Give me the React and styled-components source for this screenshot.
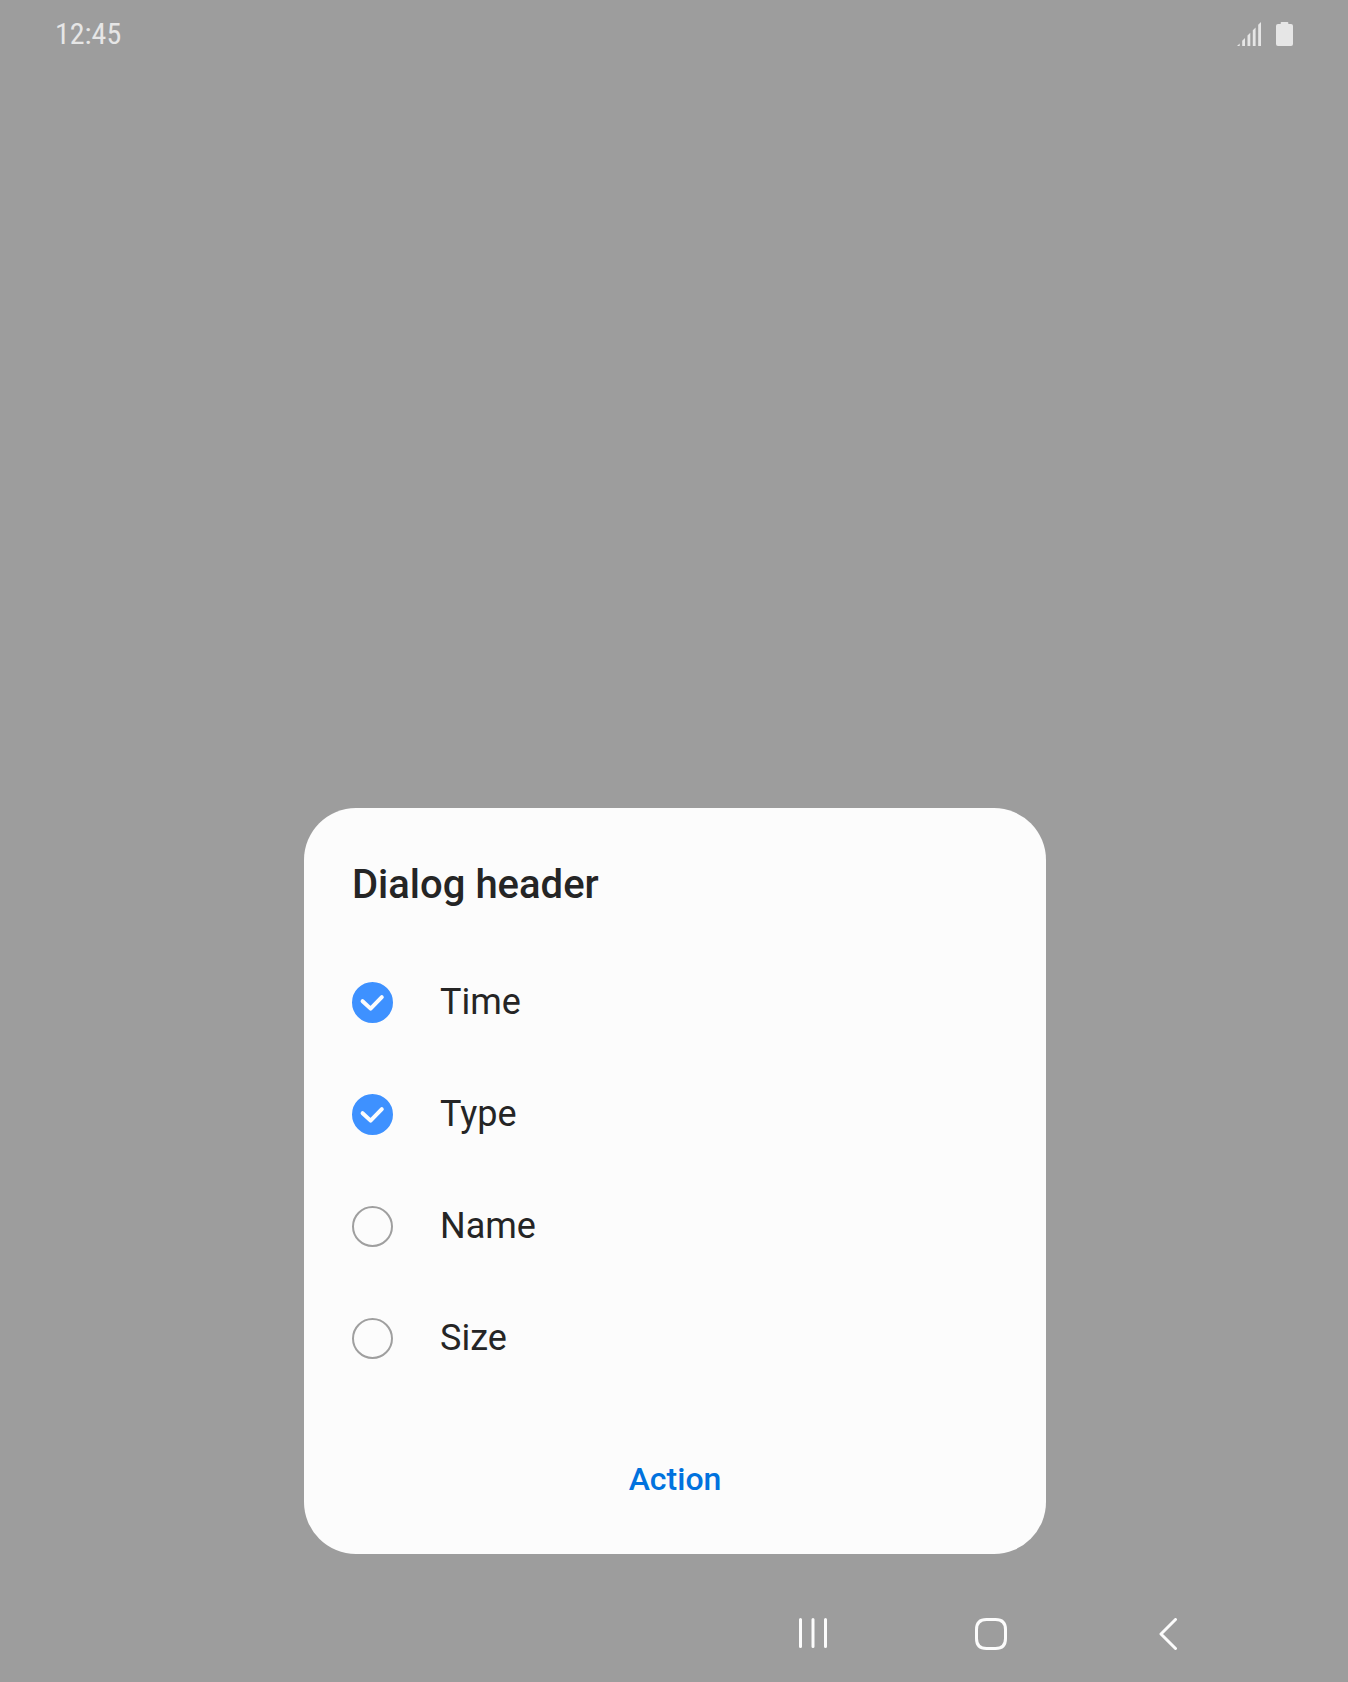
import React, { useState } from "react";
import styled, { createGlobalStyle } from "styled-components";

const GlobalStyle = createGlobalStyle`
  * { box-sizing: border-box; }
  body {
    margin: 0;
    background: #9d9d9d;
    font-family: Roboto, "Noto Sans", sans-serif;
    color: #252525;
  }
`;

const Screen = styled.div`
  display: flex;
  flex-direction: column;
  min-height: 100vh;
`;

const StatusBar = styled.header`
  display: flex;
  justify-content: space-between;
  align-items: center;
  height: 68px;
  padding: 0 55px;
`;

const Clock = styled.time`
  font-family: "Roboto Condensed", Roboto, sans-serif;
  font-size: 30px;
  line-height: 36px;
  color: #e6e6e6;
`;

const StatusIcons = styled.div`
  display: flex;
  gap: 15px;
  color: #e6e6e6;

  svg { display: block; fill: currentColor; }
`;

const Stage = styled.main`
  flex: 1;
  display: flex;
  justify-content: center;
  align-items: flex-end;
  padding: 0 46px 0 48px;
`;

const Dialog = styled.form`
  width: 100%;
  max-width: 742px;
  padding: 53px 48px 43px;
  border-radius: 52px;
  background: #fcfcfc;
`;

const Title = styled.h1`
  margin: 0 0 37px;
  font-size: 40px;
  line-height: 48px;
  font-weight: 500;
`;

const Options = styled.ul`
  margin: 0 0 53px;
  padding: 0;
  list-style: none;
`;

const OptionLabel = styled.label`
  display: flex;
  align-items: center;
  gap: 47px;
  height: 112px;
  font-size: 36px;
  line-height: 44px;
  cursor: pointer;
`;

const CheckSlot = styled.span`
  display: grid;
  flex: none;
  width: 41px;
  height: 41px;

  > * { grid-area: 1 / 1; }
`;

const Checkbox = styled.input`
  appearance: none;
  width: 41px;
  height: 41px;
  margin: 0;
  border: 2px solid #9f9f9f;
  border-radius: 50%;
  cursor: pointer;

  &:checked {
    border-color: #3e91ff;
    background: #3e91ff;
  }
`;

const Tick = styled.svg`
  fill: none;
  stroke: #fcfcfc;
  stroke-width: 4;
  stroke-linecap: round;
  stroke-linejoin: round;
  pointer-events: none;
  visibility: ${(p) => (p.$on ? "visible" : "hidden")};
`;

const Actions = styled.div`
  display: flex;
  justify-content: center;
`;

const ActionButton = styled.button`
  padding: 12px 32px;
  border: 0;
  background: none;
  font-family: inherit;
  font-size: 32px;
  line-height: 40px;
  font-weight: 500;
  color: #0072de;
  cursor: pointer;
`;

const NavBar = styled.nav`
  display: flex;
  justify-content: flex-end;
  height: 128px;
  padding: 32px 90px 0 0;
`;

const NavButton = styled.button`
  display: flex;
  justify-content: center;
  align-items: center;
  width: 178px;
  height: 96px;
  padding: 0;
  border: 0;
  background: none;
  cursor: pointer;

  svg {
    fill: none;
    stroke: #fcfcfc;
    stroke-width: 3;
    stroke-linecap: round;
    stroke-linejoin: round;
  }
`;

function Option({ label, initial }) {
  const [on, setOn] = useState(initial);
  return (
    <li>
      <OptionLabel>
        <CheckSlot>
          <Checkbox type="checkbox" checked={on} onChange={(e) => setOn(e.target.checked)} />
          <Tick $on={on} width="41" height="41" viewBox="0 0 41 41" aria-hidden="true">
            <path d="M10.6 19.2 18.6 26.6 29.8 15.2" />
          </Tick>
        </CheckSlot>
        {label}
      </OptionLabel>
    </li>
  );
}

const options = [
  { label: "Time", initial: true },
  { label: "Type", initial: true },
  { label: "Name", initial: false },
  { label: "Size", initial: false },
];

export default function App() {
  return (
    <Screen>
      <GlobalStyle />
      <StatusBar>
        <Clock>12:45</Clock>
        <StatusIcons>
          <svg width="24" height="24" viewBox="0 0 24 24" role="img" aria-label="Signal">
            <path d="M0 24 2.7 21.5V24zM5.2 24V18.8L8 16V24zM10.5 24V13.5L13.3 10.7V24zM15.8 24V8.2L18.6 5.4V24zM21.2 24V2.8L24 0V24z" />
          </svg>
          <svg width="17" height="24" viewBox="0 0 17 24" role="img" aria-label="Battery">
            <path d="M5.5 0h6Q12.3 0 12.3.8V2H15q2 0 2 2v18q0 2-2 2H2q-2 0-2-2V4q0-2 2-2H4.7V.8Q4.7 0 5.5 0z" />
          </svg>
        </StatusIcons>
      </StatusBar>
      <Stage>
        <Dialog onSubmit={(e) => e.preventDefault()} aria-labelledby="dialog-title">
          <Title id="dialog-title">Dialog header</Title>
          <Options>
            {options.map((o) => (
              <Option key={o.label} {...o} />
            ))}
          </Options>
          <Actions>
            <ActionButton type="submit">Action</ActionButton>
          </Actions>
        </Dialog>
      </Stage>
      <NavBar>
        <NavButton type="button" aria-label="Recent apps">
          <svg width="32" height="32" viewBox="0 0 32 32">
            <path d="M3.5 1.5v27M16 1.5v27M28.5 1.5v27" />
          </svg>
        </NavButton>
        <NavButton type="button" aria-label="Home">
          <svg width="32" height="32" viewBox="0 0 32 32">
            <path d="M11.5 1.5h9q10 0 10 10v9q0 10-10 10h-9q-10 0-10-10v-9q0-10 10-10z" />
          </svg>
        </NavButton>
        <NavButton type="button" aria-label="Back">
          <svg width="32" height="32" viewBox="0 0 32 32">
            <path d="M22.5 1.5 8 16 22.5 30.5" />
          </svg>
        </NavButton>
      </NavBar>
    </Screen>
  );
}
